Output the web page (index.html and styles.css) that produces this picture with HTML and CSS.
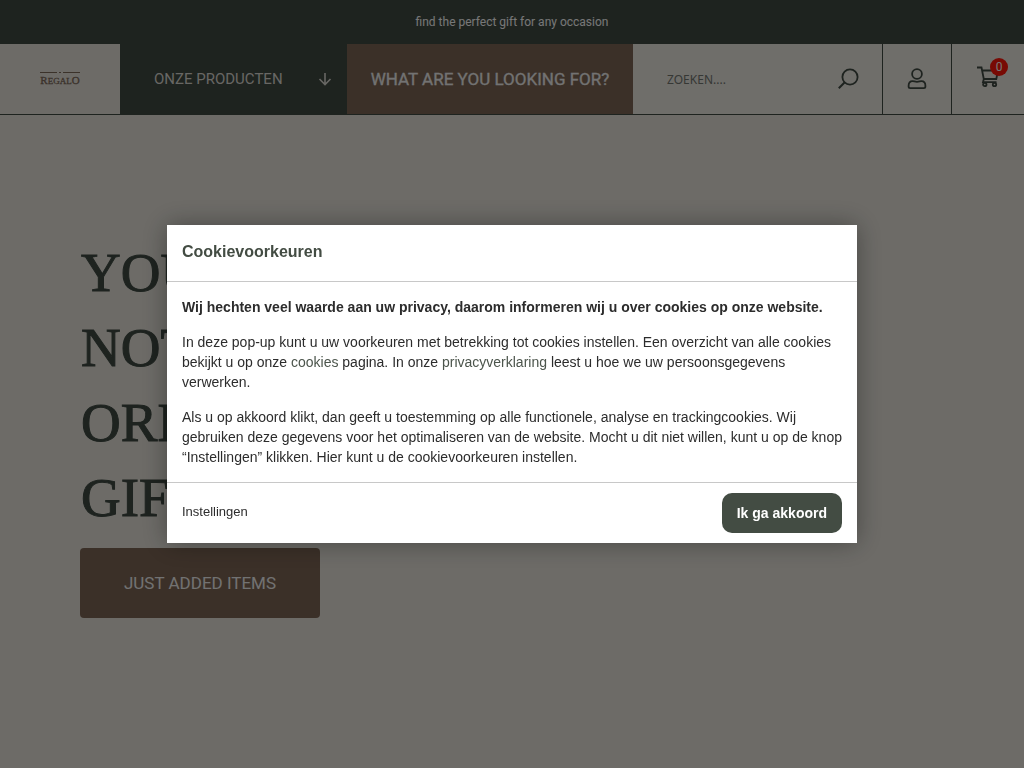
FILE: index.html
```html
<!DOCTYPE html>
<html lang="nl">
<head>
<meta charset="utf-8">
<meta name="viewport" content="width=device-width, initial-scale=1">
<title>Regalo</title>
<link rel="stylesheet" href="styles.css">
</head>
<body>
<div class="topbar">find the perfect gift for any occasion</div>
<header class="header">
  <a class="logo" href="#" aria-label="Regalo">
    <svg class="logo-rule" viewBox="0 0 40 3" aria-hidden="true"><path d="M0 1.5h17M23 1.5h17M19 1.5h2" stroke="currentColor" fill="none"/></svg>
    <span class="logo-name"><span class="logo-large">R</span>EGAL<span class="logo-large">O</span></span>
  </a>
  <button class="products" type="button">
    <span>ONZE PRODUCTEN</span>
    <svg class="arrow" viewBox="0 0 14 14" aria-hidden="true"><path d="M7 1v11.500M1.500 7l5.500 5.500L12.500 7" fill="none" stroke="currentColor" stroke-width="1.6"/></svg>
  </button>
  <a class="finder" href="#">WHAT ARE YOU LOOKING FOR?</a>
  <form class="search">
    <input class="search-input" type="search" placeholder="ZOEKEN...." aria-label="Zoeken">
    <button class="search-button" type="button" aria-label="Zoek">
      <svg class="icon" viewBox="0 0 22 22" aria-hidden="true"><circle cx="13" cy="9" r="7.600"/><path d="M7.500 14.500L1.800 20.200" stroke-width="2"/></svg>
    </button>
  </form>
  <a class="account" href="#" aria-label="Account">
    <svg class="icon" viewBox="0 0 22 22" aria-hidden="true"><circle cx="11" cy="6" r="4.900"/><path d="M4.200 20.200h13.600q1.600 0 1.600-1.600v-.9q0-4.600-4-4.600c-1.500 0-2.300.7-4.400.7s-2.900-.7-4.400-.7q-4 0-4 4.600v.9q0 1.600 1.600 1.600z"/></svg>
  </a>
  <a class="cart" href="#" aria-label="Winkelwagen">
    <span class="cart-icon">
      <svg class="icon" viewBox="0 0 22 22" aria-hidden="true"><path d="M0 1.500h4.500l2.300 11.500h12.500L21 4.500H5.500M6.800 13l-.8 3.200h13.500"/><circle cx="7.800" cy="18.500" r="1.700"/><circle cx="17.500" cy="18.500" r="1.700"/></svg>
      <span class="badge">0</span>
    </span>
  </a>
</header>
<main class="hero">
  <h1 class="title">YOUR<br>NOT<br>ORDINARY<br>GIFT</h1>
  <a class="cta" href="#">JUST ADDED ITEMS</a>
</main>
<div class="overlay">
  <section class="modal" role="dialog" aria-modal="true" aria-labelledby="cookie-title">
    <h2 class="modal-title" id="cookie-title">Cookievoorkeuren</h2>
    <div class="modal-body">
      <p><strong>Wij hechten veel waarde aan uw privacy, daarom informeren wij u over cookies op onze website.</strong></p>
      <p>In deze pop-up kunt u uw voorkeuren met betrekking tot cookies instellen. Een overzicht van alle cookies bekijkt u op onze <a href="#">cookies</a> pagina. In onze <a href="#">privacyverklaring</a> leest u hoe we uw persoonsgegevens verwerken.</p>
      <p>Als u op akkoord klikt, dan geeft u toestemming op alle functionele, analyse en trackingcookies. Wij gebruiken deze gegevens voor het optimaliseren van de website. Mocht u dit niet willen, kunt u op de knop “Instellingen” klikken. Hier kunt u de cookievoorkeuren instellen.</p>
    </div>
    <div class="modal-footer">
      <button class="settings" type="button">Instellingen</button>
      <button class="accept" type="button">Ik ga akkoord</button>
    </div>
  </section>
</div>
</body>
</html>
```
FILE: styles.css
```css
* { box-sizing: border-box; }
body {
  margin: 0;
  min-height: 100vh;
  overflow: hidden;
  background: #dad7cf;
  color: #3c463f;
  font-family: Roboto, "Liberation Sans", sans-serif;
}
a { color: inherit; text-decoration: none; }
button { border: 0; padding: 0; background: none; color: inherit; font: inherit; cursor: pointer; }
.topbar {
  padding: 14px;
  background: #3c463f;
  color: #eee;
  font-size: 12px;
  line-height: 16px;
  text-align: center;
}
.header {
  display: grid;
  grid-template-columns: 120px 227px 286px minmax(0, 1fr) 69px 73px;
  height: 71px;
  border-bottom: 1px solid #3c463f;
  background: #dfdcd5;
}
.logo {
  display: flex;
  flex-direction: column;
  align-items: center;
  justify-content: center;
  background: #dad7cf;
  color: #766455;
}
.logo-rule { width: 40px; height: 3px; }
.logo-name { font: 9px/12px "Liberation Serif", serif; -webkit-text-stroke: 0.3px currentColor; }
.logo-large { font-size: 11px; }
.products {
  display: flex;
  align-items: center;
  justify-content: space-between;
  padding: 0 15px 0 34px;
  background: #3c463f;
  color: #d0cec8;
  font-size: 15px;
}
.arrow { width: 14px; height: 14px; }
.finder {
  display: flex;
  align-items: center;
  justify-content: center;
  background: #766050;
  color: #e4e4e4;
  font-size: 17px;
  -webkit-text-stroke: 0.3px currentColor;
}
.search { display: flex; align-items: center; padding: 0 23px 0 34px; }
.search-input {
  flex: 1;
  min-width: 0;
  border: 0;
  padding: 0;
  background: none;
  color: inherit;
  font: 12px "Noto Sans", sans-serif;
}
.search-input::placeholder { color: #6c706a; opacity: 1; }
.search-button { display: flex; }
.icon { display: block; width: 22px; height: 22px; fill: none; stroke: currentColor; stroke-width: 1.8; }
.account, .cart {
  display: flex;
  align-items: center;
  justify-content: center;
  border-left: 1px solid #3c463f;
}
.cart { padding-bottom: 4px; }
.cart-icon { position: relative; }
.badge {
  position: absolute;
  top: -8px;
  right: -9px;
  width: 18px;
  height: 18px;
  border-radius: 50%;
  background: #f01408;
  color: #eee;
  font-size: 12px;
  line-height: 18px;
  text-align: center;
}
.hero { padding: 120px 80px; }
.title {
  margin: 0 0 13px;
  padding-left: 1px;
  font: 55px/75px "Liberation Serif", serif;
  -webkit-text-stroke: 1px currentColor;
}
.cta {
  display: inline-flex;
  align-items: center;
  justify-content: center;
  width: 240px;
  height: 70px;
  border-radius: 4px;
  background: #766050;
  color: #e4e4e4;
  font-size: 17px;
}
.overlay {
  position: fixed;
  inset: 0;
  display: flex;
  align-items: center;
  justify-content: center;
  background: rgba(0, 0, 0, 0.5);
}
.modal {
  width: 690px;
  max-width: 100%;
  background: #fff;
  box-shadow: 0 0 24px rgba(0, 0, 0, 0.35);
  color: #2c2c2c;
  font: 14px/20px "Liberation Sans", Arial, sans-serif;
}
.modal-title {
  margin: 0;
  padding: 15px 15px 17px;
  border-bottom: 1px solid #c8c8c8;
  color: #434c43;
  font-size: 16px;
  line-height: 24px;
}
.modal-body { padding: 15px; }
.modal-body p { margin: 0 0 15px; }
.modal-body p:last-child { margin-bottom: 0; }
.modal-body a { color: #4c554c; }
.modal-footer {
  display: flex;
  align-items: center;
  justify-content: space-between;
  padding: 10px 15px;
  border-top: 1px solid #c8c8c8;
}
.settings { padding-bottom: 2px; font-size: 13px; }
.accept {
  padding: 10px 15px;
  border-radius: 10px;
  background: #434c43;
  color: #fff;
  font-weight: bold;
  line-height: 20px;
}
```
